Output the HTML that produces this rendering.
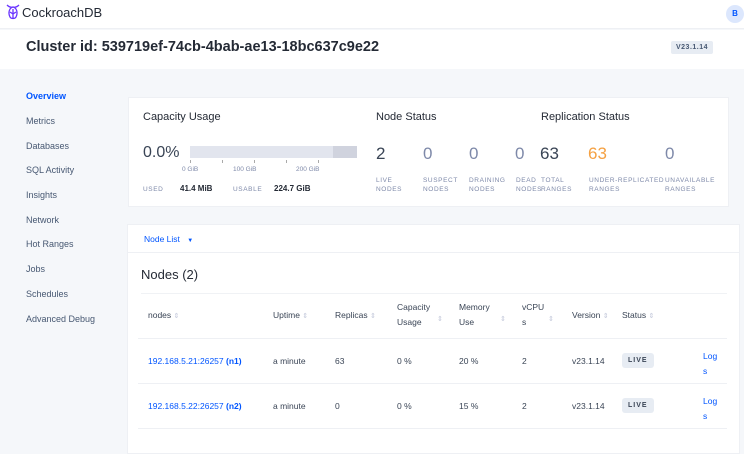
<!DOCTYPE html>
<html><head><meta charset="utf-8"><style>
*{margin:0;padding:0;box-sizing:border-box}
body{width:744px;height:447px;overflow:hidden;background:#f5f7fa;font-family:"Liberation Sans",sans-serif;color:#394455;position:relative}
.a{position:absolute;white-space:nowrap}
.nav{font-size:9px;color:#475872}
.lbl{font-size:6.5px;letter-spacing:0.6px;color:#7e89a9;line-height:9px}
.big{font-size:17px;color:#7e89a9}
.th{font-size:8.5px;color:#394455;line-height:15px}
.td{font-size:8.5px;color:#394455}
.lnk{color:#0055ff;font-size:8.5px}
.badge{background:#e7ecf3;border-radius:3px;font-size:7px;font-weight:bold;letter-spacing:1px;color:#394455;padding:4px 6px}
.sort{color:#c0c6d9;font-size:7px}
</style></head><body>
<div class="a" style="left:0;top:0;width:744px;height:29px;background:#fff;border-bottom:1px solid #eef0f4"></div>
<svg class="a" style="left:6px;top:3px" width="14" height="18" viewBox="0 0 14 18"><path d="M1 2 Q4 5 7 4 Q10 5 13 2 M7 4 C3 5 2 10 4 14 C5 16 9 16 10 14 C12 10 11 5 7 4 Z M7 6 L7 16 M4 9 L7 11 L10 9" fill="none" stroke="#6933ff" stroke-width="1.3"/></svg>
<div class="a" style="left:22px;top:5px;font-size:13px;color:#242a35">CockroachDB</div>
<div class="a" style="left:726px;top:5px;width:18px;height:18px;border-radius:50%;background:#dce7fd;color:#0055ff;font-size:8px;font-weight:bold;text-align:center;line-height:18px">B</div>
<div class="a" style="left:0;top:30px;width:744px;height:39px;background:#fff"></div>
<div class="a" style="left:26px;top:39px;font-size:14.5px;font-weight:bold;color:#242a35">Cluster id: 539719ef-74cb-4bab-ae13-18bc637c9e22</div>
<div class="a" style="left:671px;top:41px;background:#e7ecf3;border-radius:2px;font-size:7px;font-weight:bold;letter-spacing:0.5px;color:#475872;padding:3px 5px">V23.1.14</div>

<div class="a nav" style="left:26px;top:91px;color:#0055ff;font-weight:bold">Overview</div>
<div class="a nav" style="left:26px;top:116px">Metrics</div>
<div class="a nav" style="left:26px;top:141px">Databases</div>
<div class="a nav" style="left:26px;top:165px">SQL Activity</div>
<div class="a nav" style="left:26px;top:190px">Insights</div>
<div class="a nav" style="left:26px;top:215px">Network</div>
<div class="a nav" style="left:26px;top:239px">Hot Ranges</div>
<div class="a nav" style="left:26px;top:264px">Jobs</div>
<div class="a nav" style="left:26px;top:289px">Schedules</div>
<div class="a nav" style="left:26px;top:314px">Advanced Debug</div>

<div class="a" style="left:128px;top:97px;width:601px;height:110px;background:#fff;border:1px solid #eef0f4"></div>
<div class="a" style="left:143px;top:111px;font-size:11px;color:#242a35">Capacity Usage</div>
<div class="a" style="left:376px;top:111px;font-size:11px;color:#242a35">Node Status</div>
<div class="a" style="left:541px;top:111px;font-size:11px;color:#242a35">Replication Status</div>
<div class="a" style="left:143px;top:144px;font-size:16px;color:#394455">0.0%</div>
<div class="a" style="left:190px;top:146px;width:143px;height:12px;background:#e2e5ee"></div>
<div class="a" style="left:333px;top:146px;width:24px;height:12px;background:#d0d3de"></div>
<div class="a" style="left:190px;top:160px;width:1px;height:3px;background:#aaa"></div>
<div class="a" style="left:222px;top:160px;width:1px;height:3px;background:#aaa"></div>
<div class="a" style="left:254px;top:160px;width:1px;height:3px;background:#aaa"></div>
<div class="a" style="left:286px;top:160px;width:1px;height:3px;background:#aaa"></div>
<div class="a" style="left:318px;top:160px;width:1px;height:3px;background:#aaa"></div>
<div class="a" style="left:182px;top:166px;font-size:6.5px;color:#7e89a9">0 GiB</div>
<div class="a" style="left:233px;top:166px;font-size:6.5px;color:#7e89a9">100 GiB</div>
<div class="a" style="left:296px;top:166px;font-size:6.5px;color:#7e89a9">200 GiB</div>
<div class="a lbl" style="left:143px;top:185px">USED</div>
<div class="a" style="left:180px;top:184px;font-size:8px;font-weight:bold;color:#242a35">41.4 MiB</div>
<div class="a lbl" style="left:233px;top:185px">USABLE</div>
<div class="a" style="left:274px;top:184px;font-size:8px;font-weight:bold;color:#242a35">224.7 GiB</div>

<div class="a big" style="left:376px;top:144px;color:#394455">2</div>
<div class="a big" style="left:423px;top:144px">0</div>
<div class="a big" style="left:469px;top:144px">0</div>
<div class="a big" style="left:515px;top:144px">0</div>
<div class="a big" style="left:540px;top:144px;color:#394455">63</div>
<div class="a big" style="left:588px;top:144px;color:#f5a142">63</div>
<div class="a big" style="left:665px;top:144px">0</div>
<div class="a lbl" style="left:376px;top:176px">LIVE<br>NODES</div>
<div class="a lbl" style="left:423px;top:176px">SUSPECT<br>NODES</div>
<div class="a lbl" style="left:469px;top:176px">DRAINING<br>NODES</div>
<div class="a lbl" style="left:516px;top:176px">DEAD<br>NODES</div>
<div class="a lbl" style="left:541px;top:176px">TOTAL<br>RANGES</div>
<div class="a lbl" style="left:589px;top:176px">UNDER-REPLICATED<br>RANGES</div>
<div class="a lbl" style="left:665px;top:176px">UNAVAILABLE<br>RANGES</div>

<div class="a" style="left:127px;top:224px;width:613px;height:230px;background:#fff;border:1px solid #eef0f4"></div>
<div class="a" style="left:127px;top:252px;width:613px;height:1px;background:#eef0f4"></div>
<div class="a" style="left:144px;top:234px;font-size:8.5px;color:#0055ff">Node List <span style="font-size:6px;margin-left:5px">▼</span></div>
<div class="a" style="left:141px;top:267px;font-size:13px;color:#242a35">Nodes (2)</div>
<div class="a" style="left:141px;top:293px;width:586px;height:1px;background:#f0f2f5"></div>

<div class="a th" style="left:148px;top:308px">nodes <span class="sort">⇕</span></div>
<div class="a th" style="left:273px;top:308px">Uptime <span class="sort">⇕</span></div>
<div class="a th" style="left:335px;top:308px">Replicas <span class="sort">⇕</span></div>
<div class="a th" style="left:397px;top:300px">Capacity<br>Usage</div>
<div class="a sort" style="left:437px;top:315px">⇕</div>
<div class="a th" style="left:459px;top:300px">Memory<br>Use</div>
<div class="a sort" style="left:500px;top:315px">⇕</div>
<div class="a th" style="left:522px;top:300px">vCPU<br>s</div>
<div class="a sort" style="left:548px;top:315px">⇕</div>
<div class="a th" style="left:572px;top:308px">Version <span class="sort">⇕</span></div>
<div class="a th" style="left:622px;top:308px">Status <span class="sort">⇕</span></div>

<div class="a" style="left:138px;top:338px;width:589px;height:1px;background:#eef0f4"></div>
<div class="a" style="left:138px;top:383px;width:589px;height:1px;background:#eef0f4"></div>
<div class="a" style="left:138px;top:428px;width:589px;height:1px;background:#eef0f4"></div>

<div class="a lnk" style="left:148px;top:356px">192.168.5.21:26257 <b>(n1)</b></div>
<div class="a td" style="left:273px;top:356px">a minute</div>
<div class="a td" style="left:335px;top:356px">63</div>
<div class="a td" style="left:397px;top:356px">0 %</div>
<div class="a td" style="left:459px;top:356px">20 %</div>
<div class="a td" style="left:522px;top:356px">2</div>
<div class="a td" style="left:572px;top:356px">v23.1.14</div>
<div class="a badge" style="left:622px;top:353px">LIVE</div>
<div class="a lnk" style="left:703px;top:349px;line-height:15px">Log<br>s</div>

<div class="a lnk" style="left:148px;top:401px">192.168.5.22:26257 <b>(n2)</b></div>
<div class="a td" style="left:273px;top:401px">a minute</div>
<div class="a td" style="left:335px;top:401px">0</div>
<div class="a td" style="left:397px;top:401px">0 %</div>
<div class="a td" style="left:459px;top:401px">15 %</div>
<div class="a td" style="left:522px;top:401px">2</div>
<div class="a td" style="left:572px;top:401px">v23.1.14</div>
<div class="a badge" style="left:622px;top:398px">LIVE</div>
<div class="a lnk" style="left:703px;top:394px;line-height:15px">Log<br>s</div>
</body></html>
